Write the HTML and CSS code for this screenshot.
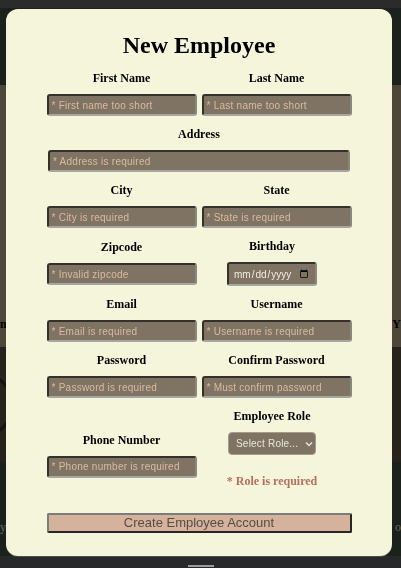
FILE: index.html
```html
<!DOCTYPE html>
<html lang="en">
<head>
<meta charset="utf-8">
<title>New Employee</title>
<link rel="stylesheet" href="styles.css">
</head>
<body>
<div class="page">
  <div class="status"></div>
  <div class="header"></div>
  <div class="band-brown">
    <span class="peek">n</span>
    <span class="peek">Y</span>
  </div>
  <div class="band-dark"><span class="ring"></span></div>
  <div class="band-green">
    <span class="peek-gray">y</span>
    <span class="peek-gray">o</span>
  </div>
  <div class="nav"><span class="handle"></span></div>
</div>

<div class="modal">
  <h1 class="title">New Employee</h1>
  <form class="form">
    <div class="field">
      <label class="label">First Name</label>
      <input class="input" type="text" placeholder="* First name too short">
    </div>
    <div class="field">
      <label class="label">Last Name</label>
      <input class="input" type="text" placeholder="* Last name too short">
    </div>
    <div class="field wide">
      <label class="label">Address</label>
      <input class="input input-wide" type="text" placeholder="* Address is required">
    </div>
    <div class="field">
      <label class="label">City</label>
      <input class="input" type="text" placeholder="* City is required">
    </div>
    <div class="field">
      <label class="label">State</label>
      <input class="input" type="text" placeholder="* State is required">
    </div>
    <div class="field">
      <label class="label">Zipcode</label>
      <input class="input" type="text" placeholder="* Invalid zipcode">
    </div>
    <div class="field shift">
      <label class="label">Birthday</label>
      <input class="date" type="date">
    </div>
    <div class="field">
      <label class="label">Email</label>
      <input class="input" type="text" placeholder="* Email is required">
    </div>
    <div class="field">
      <label class="label">Username</label>
      <input class="input" type="text" placeholder="* Username is required">
    </div>
    <div class="field">
      <label class="label">Password</label>
      <input class="input" type="password" placeholder="* Password is required">
    </div>
    <div class="field">
      <label class="label">Confirm Password</label>
      <input class="input" type="password" placeholder="* Must confirm password">
    </div>
    <div class="field">
      <label class="label">Phone Number</label>
      <input class="input" type="text" placeholder="* Phone number is required">
    </div>
    <div class="field shift">
      <label class="label">Employee Role</label>
      <div class="select-wrap">
        <select class="select">
          <option>Select Role...</option>
        </select>
        <svg class="chevron" width="8" height="6" viewBox="0 0 8 6"><path d="M1 1.5 L4 4.5 L7 1.5" fill="none" stroke="#ece4d8" stroke-width="1.5"/></svg>
      </div>
      <p class="error">* Role is required</p>
    </div>
    <button class="submit" type="button">Create Employee Account</button>
  </form>
</div>
</body>
</html>
```

FILE: styles.css
```css
html, body {
  margin: 0;
  padding: 0;
}
body {
  width: 401px;
  height: 568px;
  overflow: hidden;
  background: #1b221c;
  font-family: "Liberation Serif", "Times New Roman", serif;
}
.page {
  display: flex;
  flex-direction: column;
  height: 568px;
}
.status {
  height: 8px;
  background: #2b2b2b;
}
.header {
  height: 77px;
  background: #1b221c;
}
.band-brown {
  height: 262px;
  background: #4e4639;
  display: flex;
  justify-content: space-between;
  align-items: flex-end;
  padding: 0 0 16px;
  box-sizing: border-box;
}
.peek {
  font-weight: bold;
  font-size: 12px;
  line-height: 14px;
  color: #000;
}
.band-dark {
  height: 115px;
  background: #27231c;
  display: flex;
  justify-content: space-between;
  align-items: center;
}
.ring {
  width: 60px;
  height: 60px;
  margin-left: -52px;
  border: 3px solid #141310;
  border-radius: 50%;
}
.band-green {
  flex: 1;
  background: #1b221c;
  display: flex;
  justify-content: space-between;
  align-items: flex-end;
  padding-bottom: 22px;
}
.peek-gray {
  color: #6a6a62;
  font-size: 12px;
  line-height: 14px;
}
.nav {
  height: 12px;
  background: #27282a;
  display: flex;
  justify-content: center;
  align-items: flex-end;
}
.handle {
  width: 26px;
  height: 2px;
  background: #9c9c9c;
  margin-bottom: 1px;
}

.modal {
  position: fixed;
  left: 6px;
  top: 9px;
  width: 386px;
  height: 547px;
  box-sizing: border-box;
  padding-top: 22px;
  background: #f5f5dc;
  border-radius: 12px;
  box-shadow: 0 1px 0 #4a5040;
}
.title {
  margin: 0 0 12px;
  font-size: 24px;
  line-height: 28px;
  font-weight: bold;
  text-align: center;
  color: #000;
}
.form {
  display: grid;
  grid-template-columns: 155px 155px;
  justify-content: center;
  row-gap: 11px;
  align-items: center;
}
.field {
  display: flex;
  flex-direction: column;
  align-items: center;
}
.wide {
  grid-column: 1 / -1;
}
.shift {
  padding-right: 9px;
}
.label {
  font-size: 12px;
  line-height: 14px;
  font-weight: bold;
  color: #000;
  margin-bottom: 9px;
}
.input {
  width: 150px;
  height: 22px;
  box-sizing: border-box;
  margin: 0;
  padding: 0 3px;
  background: #7f7464;
  border: 2px solid;
  border-color: #35302a #8a8780 #a6a6a0 #35302a;
  border-radius: 3px;
  font-family: "Liberation Sans", Arial, sans-serif;
  font-size: 10px;
  letter-spacing: 0.25px;
  color: #f0e4d4;
}
.input::placeholder {
  color: #dcb9a0;
}
.input-wide {
  width: 302px;
}
.date {
  width: 90px;
  height: 24px;
  box-sizing: border-box;
  margin: 0;
  padding: 0 4px;
  background: #7f7464;
  border: 2px solid;
  border-color: #35302a #8a8780 #a6a6a0 #35302a;
  border-radius: 3px;
  font-family: "Liberation Sans", Arial, sans-serif;
  font-size: 10px;
  color: #f0ece4;
}
.select-wrap {
  position: relative;
  width: 88px;
  height: 23px;
}
.select {
  appearance: none;
  -webkit-appearance: none;
  width: 88px;
  height: 23px;
  box-sizing: border-box;
  margin: 0;
  padding: 0 0 0 7px;
  background: #7f7464;
  border: 1px solid #a39c8e;
  border-radius: 4px;
  font-family: "Liberation Sans", Arial, sans-serif;
  font-size: 10px;
  letter-spacing: 0.2px;
  color: #ece4d8;
}
.chevron {
  position: absolute;
  right: 3px;
  top: 9px;
}
.error {
  margin: 19px 0 13px;
  font-size: 12px;
  line-height: 14px;
  font-weight: bold;
  color: #b56f5e;
}
.submit {
  grid-column: 1 / -1;
  justify-self: center;
  width: 305px;
  height: 20px;
  margin-top: 1px;
  padding: 0;
  box-sizing: border-box;
  background: #d4b29c;
  border: 2px solid;
  border-color: #7c7c7a #262626 #262626 #7c7c7a;
  border-radius: 2px;
  font-family: "Liberation Sans", Arial, sans-serif;
  font-size: 13px;
  line-height: 16px;
  color: #574d44;
}
```
